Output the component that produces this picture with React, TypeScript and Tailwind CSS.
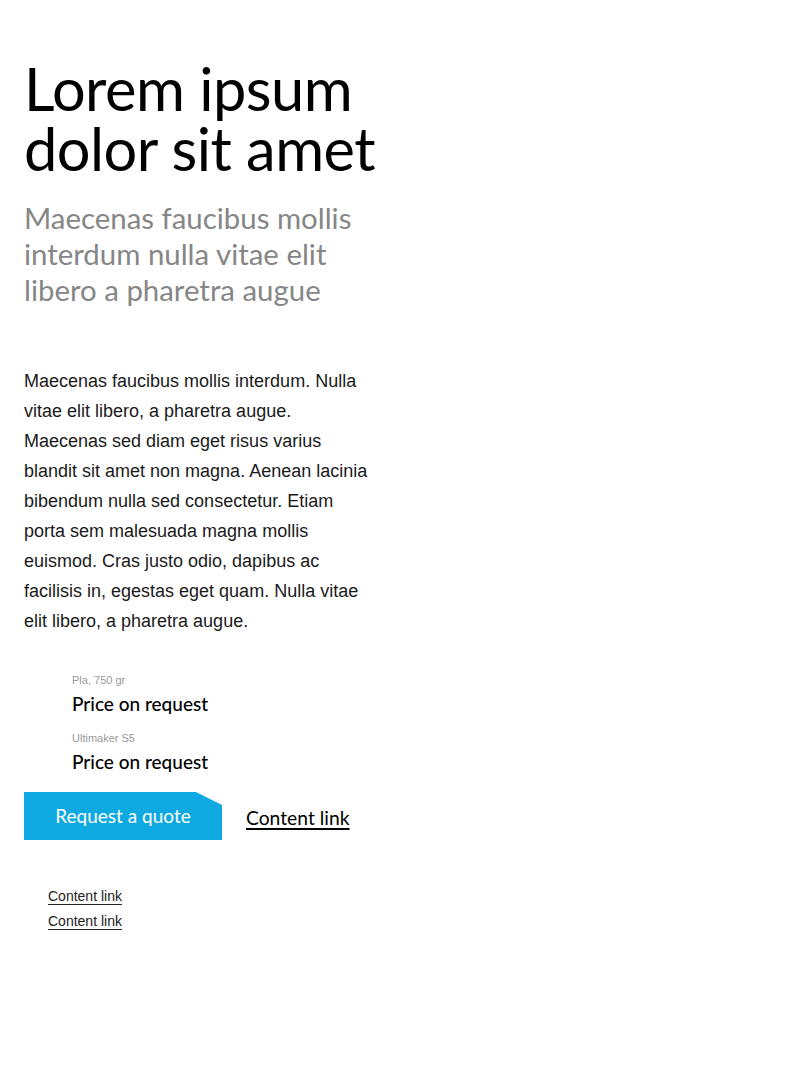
export default function App() {
  return (
    <div className="min-h-[1086px] bg-white px-6 pt-[58px] font-['Lato',sans-serif] text-black">
      <h1 className="text-[59.5px] leading-[60px] font-normal tracking-[-0.5px]">
        Lorem ipsum
        <br />
        dolor sit amet
      </h1>
      <p className="mt-[22px] text-[29.4px] leading-[36px] text-[#868686]">
        Maecenas faucibus mollis
        <br />
        interdum nulla vitae elit
        <br />
        libero a pharetra augue
      </p>
      <p className="mt-[58px] w-[346px] font-['Liberation_Sans',sans-serif] text-[18px] leading-[30px] text-[#1a1a1a]">
        Maecenas faucibus mollis interdum. Nulla vitae elit libero, a pharetra augue. Maecenas sed diam eget risus varius blandit sit amet non magna. Aenean lacinia bibendum nulla sed consectetur. Etiam porta sem malesuada magna mollis euismod. Cras justo odio, dapibus ac facilisis in, egestas eget quam. Nulla vitae elit libero, a pharetra augue.
      </p>
      <div className="mt-[37px] pl-12">
        <div className="font-['Liberation_Sans',sans-serif] text-[11px] leading-[14px] text-[#999]">Pla, 750 gr</div>
        <div className="mt-[5px] text-[19px] leading-[24px] font-medium">Price on request</div>
        <div className="mt-[15px] font-['Liberation_Sans',sans-serif] text-[11px] leading-[14px] text-[#999]">Ultimaker S5</div>
        <div className="mt-[5px] text-[19px] leading-[24px] font-medium">Price on request</div>
      </div>
      <div className="mt-[18px] flex items-center gap-6">
        <button className="flex h-12 w-[198px] items-center justify-center bg-[#0ea9e1] text-[19px] text-white [clip-path:polygon(0_0,172px_0,100%_13px,100%_100%,0_100%)]">
          Request a quote
        </button>
        <a href="#" className="mt-[4px] text-[19.3px] leading-[24px] underline underline-offset-[3px] decoration-2">
          Content link
        </a>
      </div>
      <div className="mt-[46px] flex flex-col gap-[4px] pl-6 font-['Liberation_Sans',sans-serif] text-[14px] leading-[21px] text-[#222]">
        <a href="#" className="w-fit underline underline-offset-[3px]">Content link</a>
        <a href="#" className="w-fit underline underline-offset-[3px]">Content link</a>
      </div>
    </div>
  );
}
